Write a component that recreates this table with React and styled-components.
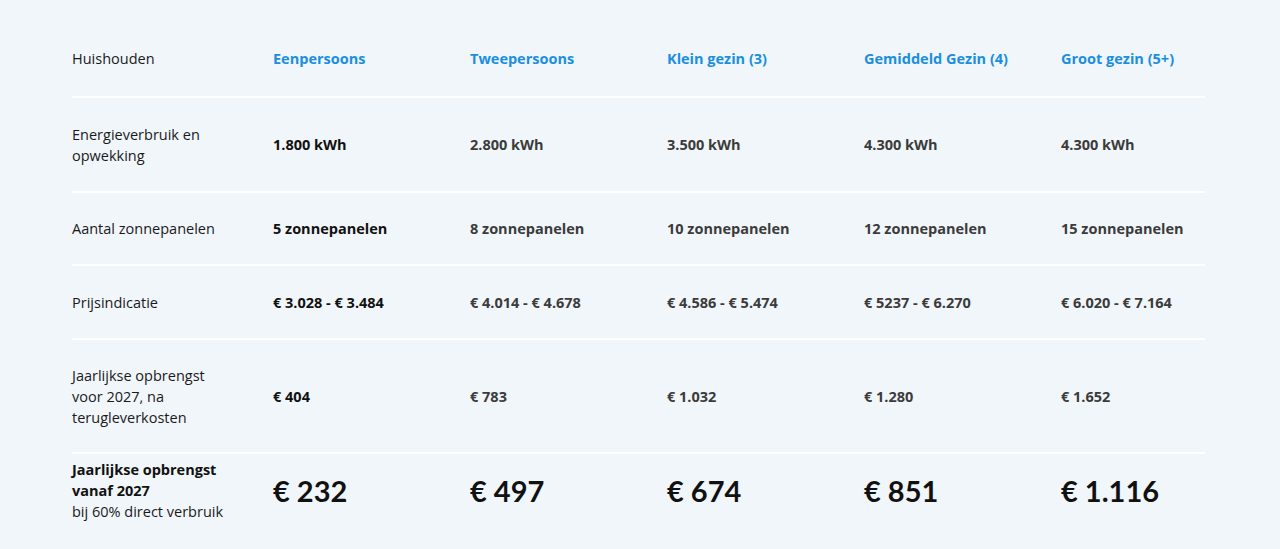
import React from "react";
import styled, { createGlobalStyle } from "styled-components";

const GlobalStyle = createGlobalStyle`
  html, body {
    margin: 0;
    padding: 0;
    background: #f1f6fa;
    font-family: "Open Sans", "Liberation Sans", sans-serif;
    color: #1a1a1a;
  }
`;

const Page = styled.div`
  padding: 20px 0 0 72px;
`;

const Table = styled.div`
  width: 1133px;
`;

const Row = styled.div`
  display: grid;
  grid-template-columns: 201px repeat(4, 197px) 144px;
  align-items: center;
  padding: ${(p) => p.$pad || "25.5px"} 0;
  border-bottom: ${(p) => (p.$last ? "none" : "2px solid #ffffff")};
`;

const Label = styled.div`
  font-size: 14.5px;
  line-height: 21px;
  color: #1a1a1a;
  padding-right: 20px;
`;

const LabelStrong = styled.span`
  display: block;
  font-weight: 700;
  color: #111;
`;

const Head = styled.div`
  font-size: 14.5px;
  line-height: 21px;
  font-weight: 700;
  color: #1a8fe0;
  white-space: nowrap;
`;

const Value = styled.div`
  font-size: 14.5px;
  line-height: 21px;
  font-weight: 700;
  color: ${(p) => (p.$first ? "#111111" : "#3b3b3b")};
  white-space: nowrap;
`;

const BigValue = styled.div`
  font-family: "Lato", "Liberation Sans", sans-serif;
  font-size: 29px;
  line-height: 36px;
  font-weight: 700;
  color: #111111;
  white-space: nowrap;
`;

const heads = [
  "Eenpersoons",
  "Tweepersoons",
  "Klein gezin (3)",
  "Gemiddeld Gezin (4)",
  "Groot gezin (5+)",
];

const rows = [
  {
    label: ["Energieverbruik en", "opwekking"],
    values: ["1.800 kWh", "2.800 kWh", "3.500 kWh", "4.300 kWh", "4.300 kWh"],
    pad: "25.5px",
  },
  {
    label: ["Aantal zonnepanelen"],
    values: ["5 zonnepanelen", "8 zonnepanelen", "10 zonnepanelen", "12 zonnepanelen", "15 zonnepanelen"],
    pad: "25px",
  },
  {
    label: ["Prijsindicatie"],
    values: ["€ 3.028 - € 3.484", "€ 4.014 - € 4.678", "€ 4.586 - € 5.474", "€ 5237 - € 6.270", "€ 6.020 - € 7.164"],
    pad: "25.5px",
  },
  {
    label: ["Jaarlijkse opbrengst", "voor 2027, na", "terugleverkosten"],
    values: ["€ 404", "€ 783", "€ 1.032", "€ 1.280", "€ 1.652"],
    pad: "24.5px",
  },
];

const totals = ["€ 232", "€ 497", "€ 674", "€ 851", "€ 1.116"];

export default function App() {
  return (
    <Page>
      <GlobalStyle />
      <Table>
        <Row $pad="27.5px">
          <Label>Huishouden</Label>
          {heads.map((h) => (
            <Head key={h}>{h}</Head>
          ))}
        </Row>
        {rows.map((r) => (
          <Row key={r.label[0]} $pad={r.pad}>
            <Label>
              {r.label.map((l, i) => (
                <React.Fragment key={i}>
                  {l}
                  {i < r.label.length - 1 && <br />}
                </React.Fragment>
              ))}
            </Label>
            {r.values.map((v, i) => (
              <Value key={i} $first={i === 0}>
                {v}
              </Value>
            ))}
          </Row>
        ))}
        <Row $last $pad="5px">
          <Label>
            <LabelStrong>Jaarlijkse opbrengst</LabelStrong>
            <LabelStrong>vanaf 2027</LabelStrong>
            bij 60% direct verbruik
          </Label>
          {totals.map((t) => (
            <BigValue key={t}>{t}</BigValue>
          ))}
        </Row>
      </Table>
    </Page>
  );
}
